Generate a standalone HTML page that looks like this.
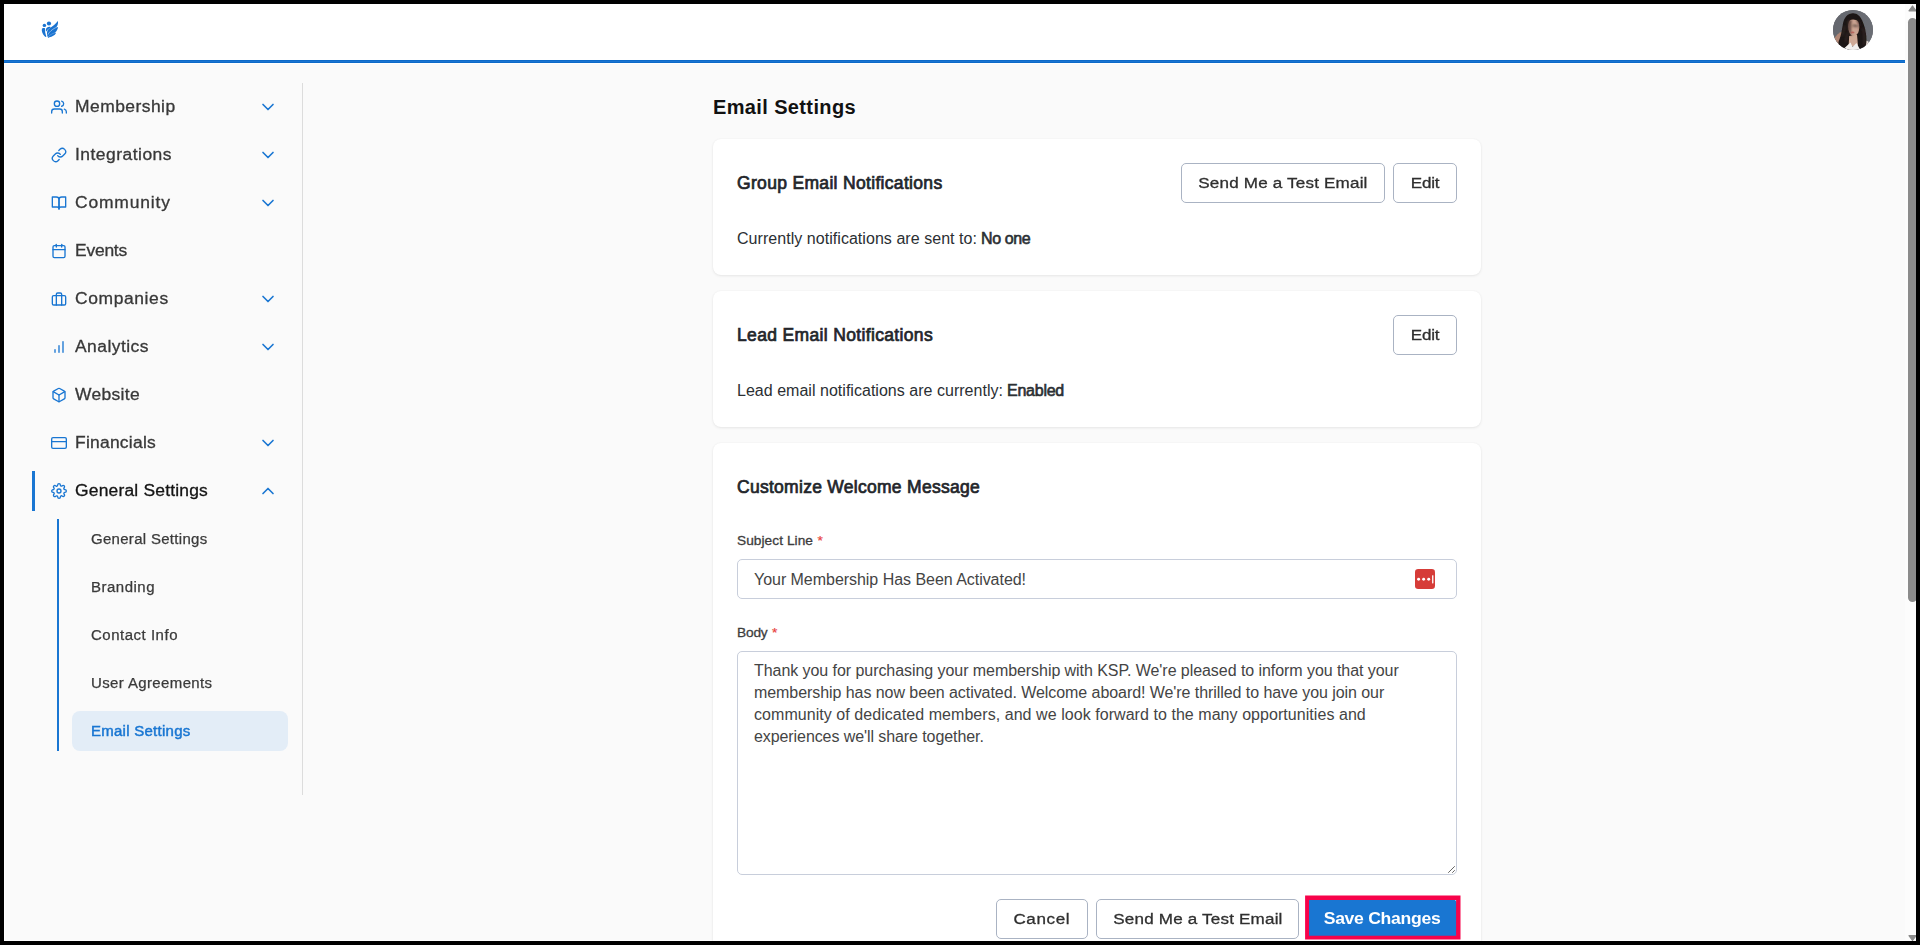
<!DOCTYPE html>
<html lang="en">
<head>
<meta charset="utf-8">
<title>Email Settings</title>
<style>
*{box-sizing:border-box;margin:0;padding:0}
html,body{width:1920px;height:945px;overflow:hidden;background:#000}
body{position:relative;font-family:"Liberation Sans",sans-serif;color:#212529}
.abs{position:absolute}
#page{position:absolute;left:4px;top:4px;width:1912px;height:937px;background:#fafafa;overflow:hidden}
#g{position:absolute;left:-4px;top:-4px;width:1920px;height:945px}
#hdr{left:4px;top:4px;width:1901px;height:56px;background:#fff}
#hline{left:4px;top:60px;width:1901px;height:3px;background:linear-gradient(#0c6ac9 0,#0c6ac9 33%,#1a74d0 33%,#1a74d0 67%,#0c6ac9 67%)}
#sbtrack{left:1905px;top:4px;width:11px;height:937px;background:#fcfcfc}
#sbthumb{left:1908px;top:18px;width:9px;height:584px;background:#8b8b8b;border-radius:4.5px}
.tri{width:0;height:0;border-left:4px solid transparent;border-right:4px solid transparent}
#sbup{left:1908px;top:5px;border-bottom:6px solid #8b8b8b}
#sbdn{left:1908px;top:934px;border-top:6px solid #8b8b8b}
#avatar{left:1833px;top:10px;width:40px;height:40px;border-radius:50%;overflow:hidden;background:#64666c}
#vdiv{left:302px;top:83px;width:1px;height:712px;background:#dcdcdc}
.nav{left:75px;height:24px;line-height:24px;font-size:16px;color:#383838;-webkit-text-stroke:0.3px currentColor;white-space:nowrap;transform:scaleX(1.09);transform-origin:0 50%}
.ico{left:51px;width:16px;height:16px}
.ico svg,.chev svg{display:block;width:100%;height:100%;fill:none;stroke:#1976d2;stroke-width:2;stroke-linecap:round;stroke-linejoin:round}
.chev{left:258px;width:20px;height:20px}
.sub{left:91px;height:20px;line-height:20px;font-size:14px;color:#3a3a3a;-webkit-text-stroke:0.25px currentColor;white-space:nowrap;transform:scaleX(1.07);transform-origin:0 50%}
#actbar{left:32px;top:471px;width:3px;height:40px;background:#1976d2}
#subline{left:57px;top:519px;width:2px;height:232px;background:#1976d2}
#subact{left:72px;top:711px;width:216px;height:40px;border-radius:8px;background:#e3edf7}
.card{left:713px;width:768px;background:#fff;border-radius:8px;box-shadow:0 1px 3px rgba(0,0,0,.08),0 0 2px rgba(0,0,0,.04)}
.h2{left:737px;font-weight:normal;-webkit-text-stroke:0.72px #23262b;font-size:17.5px;height:24px;line-height:24px;color:#23262b;white-space:nowrap}
.p{left:737px;font-size:16px;height:24px;line-height:24px;color:#2b2f33;white-space:nowrap}
.tx{color:#444}
.btn{height:40px;border:1px solid #aab3c3;border-radius:5px;background:#fff;font-size:15.5px;color:#2f2f2f;-webkit-text-stroke:0.3px #2f2f2f;text-align:center;line-height:37.4px;white-space:nowrap}
.btn span,.sx{display:inline-block;transform:scaleX(1.1);transform-origin:50% 50%}
.lbl{left:737px;font-size:13.7px;font-weight:normal;-webkit-text-stroke:0.3px #3d3d3d;height:20px;line-height:20px;color:#3d3d3d;white-space:nowrap}
.star{color:#e8413c;-webkit-text-stroke:0.2px #e8413c}
.inp{left:737px;width:720px;border:1px solid #c8cedb;border-radius:5px;background:#fff}
</style>
</head>
<body>
<div id="page"><div id="g">
  <div id="hdr" class="abs"></div>
  <div id="hline" class="abs"></div>
  <div id="sbtrack" class="abs"></div>
  <div id="sbthumb" class="abs"></div>
  <svg class="abs" style="left:1905px;top:4px" width="11" height="10" viewBox="0 0 11 10"><path d="M7.500 2L4 6.800L11 6.800Z" fill="#8b8b8b" stroke="#8b8b8b" stroke-width="1.200" stroke-linejoin="round"/></svg>
  <svg class="abs" style="left:1905px;top:931.7px" width="11" height="10" viewBox="0 0 11 10"><path d="M7.500 8.500L4 3.700L11 3.700Z" fill="#8b8b8b" stroke="#8b8b8b" stroke-width="1.200" stroke-linejoin="round"/></svg>
  <div id="avatar" class="abs"><svg viewBox="0 0 40 40" width="40" height="40" style="display:block"><defs><linearGradient id="ag" x1="0" y1="0" x2="1" y2="0.300"><stop offset="0" stop-color="#64666d"/><stop offset="1" stop-color="#6b6e75"/></linearGradient><filter id="ab" x="-10%" y="-10%" width="120%" height="120%"><feGaussianBlur stdDeviation="0.7"/></filter><filter id="ab2" x="-20%" y="-20%" width="140%" height="140%"><feGaussianBlur stdDeviation="1.1"/></filter></defs>
<rect width="40" height="40" fill="url(#ag)"/>
<g filter="url(#ab)">
<path d="M1 29C3 25.500 6 22.500 9.500 21.500L11 30L5 37C3 35 1.500 32 1 29Z" fill="#b08674"/>
<path d="M31 30.500C33.500 30 36 31.500 38 34L33 39L30 36Z" fill="#e6dcd7"/>
<path d="M20 3.200C15 3.200 11.200 7 10 13.500C9.200 18 8.800 21 8 24.500C7.200 28 5.600 30.500 5.400 33C6 35.500 8 37.300 10 37.800C12.500 38.500 15 37 17 35L24 35.500C25 37.500 26.500 39.300 28 39.500C30.500 39 32 37.500 32.800 35.500C33.800 32 33.600 28 32.900 23.500C32.300 19 31 14.500 29.300 10.800C27.500 6.500 24.500 3.200 20 3.200Z" fill="#1c1412"/>
<path d="M16.200 26L24 24.500L25 35.500L15.500 36.500Z" fill="#cfa996"/>
<path d="M16.800 10.500C19 9 23.500 9.300 25.500 12C26.800 15 26.500 19.500 25.300 22.500C24 25 21.500 26.300 19.500 26C17.300 25.300 16 22.500 15.600 19.500C15.200 16 15.300 12.500 16.800 10.500Z" fill="#cba392"/>
<path d="M11.500 38L17.500 32.500L19.500 37L23.500 33L27 39.500L20 42Z" fill="#f3f0ee"/>
</g>
<g filter="url(#ab2)">
<path d="M15 11.500C16 10 17.800 9.800 18.800 10.200C17.800 13 18.200 17 18 20C17.900 22.500 18.200 24.500 19 26C16.800 25 15.600 22 15.300 19C15 16 14.800 13 15 11.500Z" fill="#4a342d" opacity="0.850"/>
<path d="M19.500 15.200C21 14.600 23.500 14.800 25 15.800L24.800 17C23 16.300 21 16.300 19.600 16.700Z" fill="#3a2a26" opacity="0.800"/>
<path d="M23 10C26 12 27 17 26 22C27.500 18 28 13 25.500 10Z" fill="#2a1d1a"/>
<path d="M9 26C10.500 23 11 19 12 16M30 18C31.500 24 32 29 31 35M12.500 32C13.500 29 13.500 26 14.500 23" stroke="#4a3830" stroke-width="1.200" fill="none" opacity="0.700"/>
</g>
<ellipse cx="19.600" cy="22.400" rx="1.900" ry="0.900" fill="#b65d56" opacity="0.850" filter="url(#ab)"/>
</svg>
</div>
  <div id="vdiv" class="abs"></div>
  <div class="abs" style="left:4px;top:63px;width:1px;height:878px;background:#fff"></div>
  <div class="abs" style="left:4px;top:63px;width:1901px;height:1px;background:#fff"></div>
  <div class="abs" style="left:4px;top:940px;width:1901px;height:1px;background:#fff"></div>
  <svg class="abs" id="logo" style="left:30px;top:10px" width="50" height="40" viewBox="0 0 1181 945"><g fill="#1a73d0">
<ellipse cx="340" cy="365" rx="41" ry="38"/>
<ellipse cx="448" cy="320" rx="50" ry="46"/>
<path d="M281 445C288 424 340 422 357 436C350 490 362 565 388 628C374 642 364 636 352 624C298 578 268 505 281 445Z"/>
<path d="M374 478C372 425 420 392 474 398C492 404 488 418 472 428C432 452 404 480 388 506C378 500 374 492 374 478Z"/>
<path d="M430 660C398 610 390 530 418 474C470 420 560 372 618 308C640 285 650 268 655 256C672 300 660 360 626 400C640 398 652 400 664 406C652 458 628 500 596 526C602 534 608 540 612 548C588 596 520 632 460 644C448 650 440 656 430 660Z"/>
</g><g fill="none" stroke="#fff" stroke-linecap="round" stroke-dasharray="30 16">
<path stroke-width="11" d="M650 400C570 430 470 490 428 575"/>
<path stroke-width="7" opacity="0.800" d="M604 534C550 550 470 582 436 632"/>
</g></svg>

  <div id="actbar" class="abs"></div>
  <div id="subline" class="abs"></div>
  <div id="subact" class="abs"></div>
  <div class="abs ico" style="top:98.5px"><svg viewBox="0 0 24 24"><path d="M17 21v-2a4 4 0 0 0-4-4H5a4 4 0 0 0-4 4v2"/><circle cx="9" cy="7" r="4"/><path d="M23 21v-2a4 4 0 0 0-3-3.87"/><path d="M16 3.13a4 4 0 0 1 0 7.75"/></svg></div>
  <div class="abs nav" id="n0" style="top:95.25px;letter-spacing:0.426px;">Membership</div>
  <div class="abs chev" style="top:96.8px"><svg viewBox="0 0 24 24"><polyline points="6 9 12 15 18 9"/></svg></div>
  <div class="abs ico" style="top:146.5px"><svg viewBox="0 0 24 24"><path d="M10 13a5 5 0 0 0 7.54.54l3-3a5 5 0 0 0-7.07-7.07l-1.72 1.71"/><path d="M14 11a5 5 0 0 0-7.54-.54l-3 3a5 5 0 0 0 7.07 7.07l1.71-1.71"/></svg></div>
  <div class="abs nav" id="n1" style="top:143.25px;letter-spacing:0.447px;">Integrations</div>
  <div class="abs chev" style="top:144.8px"><svg viewBox="0 0 24 24"><polyline points="6 9 12 15 18 9"/></svg></div>
  <div class="abs ico" style="top:194.5px"><svg viewBox="0 0 24 24"><path d="M2 3h6a4 4 0 0 1 4 4v14a3 3 0 0 0-3-3H2z"/><path d="M22 3h-6a4 4 0 0 0-4 4v14a3 3 0 0 1 3-3h7z"/></svg></div>
  <div class="abs nav" id="n2" style="top:191.25px;letter-spacing:0.771px;">Community</div>
  <div class="abs chev" style="top:192.8px"><svg viewBox="0 0 24 24"><polyline points="6 9 12 15 18 9"/></svg></div>
  <div class="abs ico" style="top:242.5px"><svg viewBox="0 0 24 24"><rect x="3" y="4" width="18" height="18" rx="2" ry="2"/><line x1="16" y1="2" x2="16" y2="6"/><line x1="8" y1="2" x2="8" y2="6"/><line x1="3" y1="10" x2="21" y2="10"/></svg></div>
  <div class="abs nav" id="n3" style="top:239.25px;letter-spacing:-0.203px;">Events</div>
  <div class="abs ico" style="top:290.5px"><svg viewBox="0 0 24 24"><rect x="2" y="7" width="20" height="14" rx="2" ry="2"/><path d="M16 21V5a2 2 0 0 0-2-2h-4a2 2 0 0 0-2 2v16"/></svg></div>
  <div class="abs nav" id="n4" style="top:287.25px;letter-spacing:0.563px;">Companies</div>
  <div class="abs chev" style="top:288.8px"><svg viewBox="0 0 24 24"><polyline points="6 9 12 15 18 9"/></svg></div>
  <div class="abs ico" style="top:338.5px"><svg viewBox="0 0 24 24"><line x1="12" y1="20" x2="12" y2="10"/><line x1="18" y1="20" x2="18" y2="4"/><line x1="6" y1="20" x2="6" y2="16"/></svg></div>
  <div class="abs nav" id="n5" style="top:335.25px;letter-spacing:0.429px;">Analytics</div>
  <div class="abs chev" style="top:336.8px"><svg viewBox="0 0 24 24"><polyline points="6 9 12 15 18 9"/></svg></div>
  <div class="abs ico" style="top:386.5px"><svg viewBox="0 0 24 24"><path d="M21 16V8a2 2 0 0 0-1-1.73l-7-4a2 2 0 0 0-2 0l-7 4A2 2 0 0 0 3 8v8a2 2 0 0 0 1 1.73l7 4a2 2 0 0 0 2 0l7-4A2 2 0 0 0 21 16z"/><polyline points="3.27 6.96 12 12.01 20.73 6.96"/><line x1="12" y1="22.08" x2="12" y2="12"/></svg></div>
  <div class="abs nav" id="n6" style="top:383.25px;letter-spacing:0.302px;">Website</div>
  <div class="abs ico" style="top:434.5px"><svg viewBox="0 0 24 24"><rect x="1" y="4" width="22" height="16" rx="2" ry="2"/><line x1="1" y1="10" x2="23" y2="10"/></svg></div>
  <div class="abs nav" id="n7" style="top:431.25px;letter-spacing:0.227px;">Financials</div>
  <div class="abs chev" style="top:432.8px"><svg viewBox="0 0 24 24"><polyline points="6 9 12 15 18 9"/></svg></div>
  <div class="abs ico" style="top:482.5px"><svg viewBox="0 0 24 24"><circle cx="12" cy="12" r="3"/><path d="M19.4 15a1.65 1.65 0 0 0 .33 1.82l.06.06a2 2 0 0 1 0 2.83 2 2 0 0 1-2.83 0l-.06-.06a1.65 1.65 0 0 0-1.82-.33 1.65 1.65 0 0 0-1 1.51V21a2 2 0 0 1-2 2 2 2 0 0 1-2-2v-.09A1.65 1.65 0 0 0 9 19.4a1.65 1.65 0 0 0-1.82.33l-.06.06a2 2 0 0 1-2.83 0 2 2 0 0 1 0-2.83l.06-.06a1.65 1.65 0 0 0 .33-1.82 1.65 1.65 0 0 0-1.51-1H3a2 2 0 0 1-2-2 2 2 0 0 1 2-2h.09A1.65 1.65 0 0 0 4.6 9a1.65 1.65 0 0 0-.33-1.82l-.06-.06a2 2 0 0 1 0-2.83 2 2 0 0 1 2.83 0l.06.06a1.65 1.65 0 0 0 1.82.33H9a1.65 1.65 0 0 0 1-1.51V3a2 2 0 0 1 2-2 2 2 0 0 1 2 2v.09a1.65 1.65 0 0 0 1 1.51 1.65 1.65 0 0 0 1.82-.33l.06-.06a2 2 0 0 1 2.83 0 2 2 0 0 1 0 2.83l-.06.06a1.65 1.65 0 0 0-.33 1.82V9a1.65 1.65 0 0 0 1.51 1H21a2 2 0 0 1 2 2 2 2 0 0 1-2 2h-.09a1.65 1.65 0 0 0-1.51 1z"/></svg></div>
  <div class="abs nav" id="n8" style="top:479.25px;letter-spacing:0.177px;color:#141414;">General Settings</div>
  <div class="abs chev" style="top:480.8px"><svg viewBox="0 0 24 24"><polyline points="18 15 12 9 6 15"/></svg></div>
  <div class="abs sub" id="s0" style="top:528.60px;letter-spacing:0.287px;">General Settings</div>
  <div class="abs sub" id="s1" style="top:576.60px;letter-spacing:0.471px;">Branding</div>
  <div class="abs sub" id="s2" style="top:624.60px;letter-spacing:0.484px;">Contact Info</div>
  <div class="abs sub" id="s3" style="top:672.60px;letter-spacing:0.359px;">User Agreements</div>
  <div class="abs sub" id="s4" style="top:720.60px;letter-spacing:0.250px;color:#1976d2;-webkit-text-stroke:0.45px #1976d2;">Email Settings</div>
  <div class="abs" id="title" style="left:713px;top:93.3px;height:28px;line-height:28px;font-size:20px;font-weight:bold;color:#111;white-space:nowrap;letter-spacing:0.370px;">Email Settings</div>
  <div class="abs card" style="top:139px;height:136px"></div>
  <div class="abs card" style="top:291px;height:136px"></div>
  <div class="abs card" style="top:443px;height:520px"></div>
  <div class="abs h2" id="h1" style="top:171px;letter-spacing:0.322px;">Group Email Notifications</div>
  <div class="abs p" id="p1" style="top:227px;letter-spacing:0.046px;">Currently notifications are sent to:</div>
  <div class="abs p" id="p1b" style="left:981px;top:227px;-webkit-text-stroke:0.62px #2b2f33;letter-spacing:-0.368px;">No one</div>
  <div class="abs btn" style="left:1181px;top:163px;width:204px"><span id="b1" style="letter-spacing:0.171px;">Send Me a Test Email</span></div>
  <div class="abs btn" style="left:1393px;top:163px;width:64px"><span id="b2" style="letter-spacing:-0.179px;">Edit</span></div>
  <div class="abs h2" id="h2" style="top:323px;letter-spacing:0.344px;">Lead Email Notifications</div>
  <div class="abs p" id="p2" style="top:379px;letter-spacing:0.025px;">Lead email notifications are currently:</div>
  <div class="abs p" id="p2b" style="left:1007px;top:379px;-webkit-text-stroke:0.62px #2b2f33;letter-spacing:-0.246px;">Enabled</div>
  <div class="abs btn" style="left:1393px;top:315px;width:64px"><span id="b3" style="letter-spacing:-0.179px;">Edit</span></div>
  <div class="abs h2" id="h3" style="top:475px;letter-spacing:0.279px;">Customize Welcome Message</div>
  <div class="abs lbl" id="l1" style="top:530.7px;letter-spacing:0.055px;">Subject Line</div>
  <div class="abs lbl star" style="left:817.5px;top:530.7px">*</div>
  <div class="abs inp" style="top:559px;height:40px"></div>
  <div class="abs p tx" id="iv" style="left:754px;top:568px;letter-spacing:-0.038px;">Your Membership Has Been Activated!</div>
  <div class="abs" id="lp" style="left:1415px;top:568.7px;width:20.2px;height:20.4px;border-radius:3.2px;background:#d63c38"><svg viewBox="0 0 20 20" width="20" height="20" style="display:block"><circle cx="3.6" cy="10.2" r="1.45" fill="#fff"/><circle cx="8.65" cy="10.2" r="1.45" fill="#fff"/><circle cx="13.7" cy="10.2" r="1.45" fill="#fff"/><rect x="17.1" y="6.2" width="1.3" height="8.3" rx="0.4" fill="#fff"/></svg></div>
  <div class="abs lbl" id="l2" style="top:622.7px;letter-spacing:-0.176px;">Body</div>
  <div class="abs lbl star" style="left:772px;top:622.7px">*</div>
  <div class="abs inp" style="top:651px;height:224px"></div>
  <div class="abs p tx" id="t0" style="left:754px;top:660px;height:22px;line-height:22px;letter-spacing:-0.059px;">Thank you for purchasing your membership with KSP. We're pleased to inform you that your</div>
  <div class="abs p tx" id="t1" style="left:754px;top:682px;height:22px;line-height:22px;letter-spacing:-0.064px;">membership has now been activated. Welcome aboard! We're thrilled to have you join our</div>
  <div class="abs p tx" id="t2" style="left:754px;top:704px;height:22px;line-height:22px;letter-spacing:0.054px;">community of dedicated members, and we look forward to the many opportunities and</div>
  <div class="abs p tx" id="t3" style="left:754px;top:726px;height:22px;line-height:22px;letter-spacing:-0.084px;">experiences we'll share together.</div>
  <svg class="abs" style="left:1447px;top:865px" width="9" height="9" viewBox="0 0 9 9"><path d="M1.5 7.5L7.5 1.5M5.5 7.5L7.5 5.5" stroke="#555" stroke-width="0.9" stroke-linecap="round" fill="none"/></svg>
  <div class="abs btn" style="left:996px;top:899px;width:92px"><span id="b4" style="letter-spacing:0.564px;">Cancel</span></div>
  <div class="abs btn" style="left:1096px;top:899px;width:203px"><span id="b5" style="letter-spacing:0.171px;">Send Me a Test Email</span></div>
  <div class="abs" style="left:1307px;top:899px;width:150px;height:40px;background:#1976d2;border-radius:5px;color:#fff;font-weight:bold;font-size:16px;line-height:40px;text-align:center;white-space:nowrap"><span id="b6" class="sx" style="letter-spacing:-0.275px;">Save Changes</span></div>
  <svg class="abs" id="hl" style="left:1300px;top:890px" width="170" height="55" viewBox="0 0 170 55"><path fill="#f7034a" fill-rule="evenodd" d="M5.100 5.400H160.500V49.400H5.100ZM9.060 10V45.700H156.100V10Z"/></svg>
</div></div>
</body>
</html>
